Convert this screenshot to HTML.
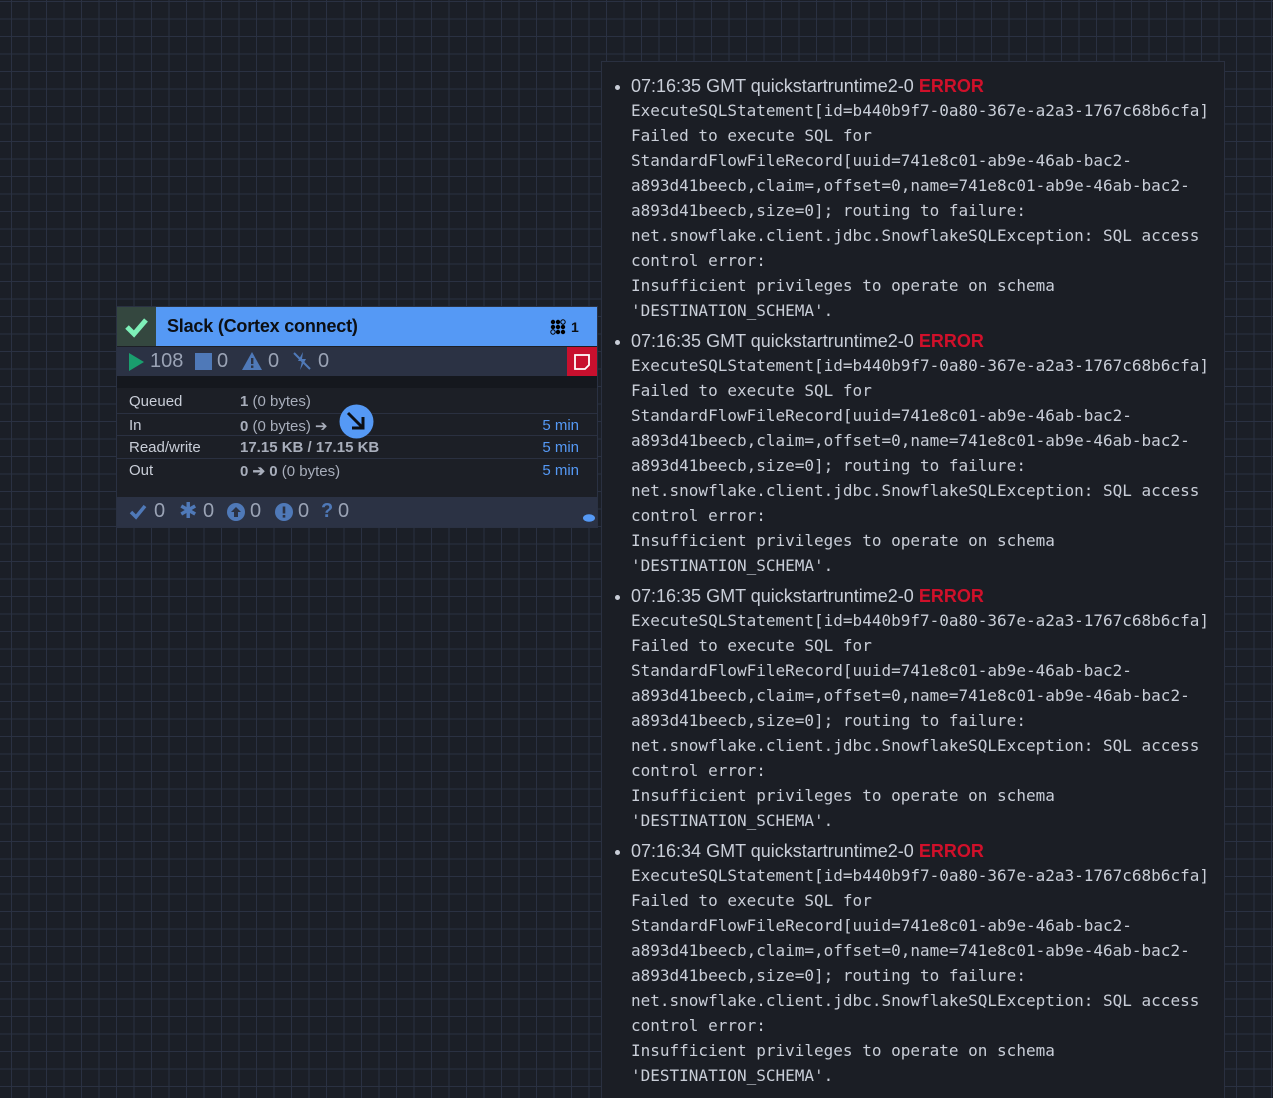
<!DOCTYPE html>
<html><head><meta charset="utf-8"><style>
html,body{margin:0;padding:0;overflow:hidden;width:1273px;height:1098px}
body{position:relative;background-color:#1b1f27;
background-image:linear-gradient(#2a3142 1px,transparent 1px),linear-gradient(90deg,#2a3142 1px,transparent 1px);
background-size:17.5px 17.5px;background-position:11px 1px;font-family:"Liberation Sans",sans-serif}
.node{position:absolute;left:117px;top:307px;width:480px;height:220px;background:#1c1f26;box-shadow:0 0 0 1px #2a3142}
.hdr{position:absolute;left:0;top:0;width:480px;height:39px;background:#5599f5}
.chk{position:absolute;left:0;top:0;width:39px;height:39px;background:#34473f}
.title{position:absolute;left:50px;top:9px;font-size:18px;color:#0c0f14;font-weight:bold;letter-spacing:-0.2px}
.stats{position:absolute;left:0;top:40px;width:480px;height:29px;background:#2b3244;color:#9aa3b5;font-size:20px}
.stats span{position:absolute;top:3px}
.red{position:absolute;right:0;top:0;width:30px;height:29px;background:#c8102e}
.tbl{position:absolute;left:0;top:83px;width:480px;font-size:15px;color:#c9ced8}
.row{position:absolute;left:0;width:480px;height:22px}
.row .l{position:absolute;left:12px;top:3px}
.row .v{position:absolute;left:123px;top:3px;color:#a8aebb}
.row .v b{color:#a8aebb}
.row .t{position:absolute;right:18px;top:3px;color:#5599f5}
.sep{border-top:1px solid #2a3040}
.bot{position:absolute;left:0;top:190px;width:480px;height:30px;background:#2b3244;color:#9aa3b5;font-size:20px}
.bot span{position:absolute;top:3px}
.ic{color:#4f79b8}
.panel{position:absolute;left:601px;top:61px;width:622px;height:1040px;background:#1b1e25;border:1px solid #2a3040}
.ent{position:absolute;left:29px;width:600px}
.h{font-size:18px;color:#c9ced8;height:25px;line-height:25px;position:relative}
.h:before{content:"";position:absolute;left:-16px;top:11px;width:5px;height:5px;border-radius:50%;background:#c9ced8}
.err{color:#d0102a;font-weight:bold}
.m{font-family:"DejaVu Sans Mono","Liberation Mono",monospace;font-size:16px;color:#c9ced8;line-height:25px;white-space:pre;margin-top:-1px}
</style></head><body>
<div class="node">
 <div class="hdr"><div class="chk"><svg width="39" height="39"><path d="M10 20 L17 27 L29 13" stroke="#7ef0b8" stroke-width="5" fill="none"/></svg></div>
 <div class="title">Slack (Cortex connect)</div>
 <svg style="position:absolute;left:433px;top:12px" width="16" height="16"><g fill="#000"><circle cx="3" cy="3" r="2.2"/><circle cx="8" cy="3" r="2.2"/><circle cx="13" cy="3" r="2.2" fill="none" stroke="#000"/><circle cx="3" cy="8" r="2.2"/><circle cx="8" cy="8" r="2.2"/><circle cx="13" cy="8" r="2.2"/><circle cx="3" cy="13" r="2.2" fill="none" stroke="#000"/><circle cx="8" cy="13" r="2.2"/><circle cx="13" cy="13" r="2.2"/></g></svg>
 <div style="position:absolute;left:454px;top:12px;font-size:14px;font-weight:bold;color:#0c0f14">1</div>
 </div>
 <div class="stats">
  <svg style="position:absolute;left:12px;top:6px" width="16" height="18"><path d="M0 0 L15 9 L0 18Z" fill="#1a9e6e"/></svg>
  <span style="left:33px">108</span>
  <svg style="position:absolute;left:78px;top:6px" width="17" height="17"><rect width="17" height="17" fill="#4f79b8"/></svg>
  <span style="left:100px">0</span>
  <svg style="position:absolute;left:125px;top:5px" width="20" height="18"><path d="M10 0 L20 18 L0 18Z" fill="#4f79b8"/><rect x="9" y="6" width="2.4" height="6" fill="#2b3244"/><rect x="9" y="13.5" width="2.4" height="2.4" fill="#2b3244"/></svg>
  <span style="left:151px">0</span>
  <svg style="position:absolute;left:175px;top:4px" width="20" height="20"><path d="M11 1 L6 10 L10 10 L8 19 L14 8 L10 8 Z" fill="#4f79b8"/><path d="M2 2 L18 18" stroke="#4f79b8" stroke-width="2"/></svg>
  <span style="left:201px">0</span>
  <div class="red"><svg width="30" height="29"><path d="M8 8 H22 V18 L18 22 H8Z" fill="none" stroke="#fff" stroke-width="1.8"/></svg></div>
 </div>
 <div style="position:absolute;left:0;top:69px;width:480px;height:12px;background:#15181e"></div>
 <div class="tbl">
  <div class="row" style="top:0"><span class="l">Queued</span><span class="v"><b>1</b> (0 bytes)</span></div>
  <div class="row sep" style="top:23px"><span class="l">In</span><span class="v"><b>0</b> (0 bytes) ➔</span><span class="t">5 min</span></div>
  <div class="row sep" style="top:45px"><span class="l">Read/write</span><span class="v"><b>17.15 KB / 17.15 KB</b></span><span class="t">5 min</span></div>
  <div class="row sep" style="top:68px"><span class="l">Out</span><span class="v"><b>0 ➔ 0</b> (0 bytes)</span><span class="t">5 min</span></div>
 </div>
 <svg style="position:absolute;left:222px;top:97px" width="35" height="35"><circle cx="17.5" cy="17.5" r="17" fill="#5599f5"/><path d="M9 9 L23 23 M24 13 L24 24 L13 24" stroke="#0c0f14" stroke-width="3" fill="none"/></svg>
 <div class="bot">
  <svg style="position:absolute;left:12px;top:7px" width="18" height="16"><path d="M2 8 L7 13 L16 2" stroke="#4f79b8" stroke-width="3.5" fill="none"/></svg>
  <span style="left:37px">0</span>
  <span class="ic" style="left:62px;font-size:22px;top:1px">✱</span>
  <span style="left:86px">0</span>
  <svg style="position:absolute;left:110px;top:6px" width="18" height="18"><circle cx="9" cy="9" r="9" fill="#4f79b8"/><path d="M9 4 L14 9 H11 V14 H7 V9 H4Z" fill="#2b3244"/></svg>
  <span style="left:133px">0</span>
  <svg style="position:absolute;left:158px;top:6px" width="18" height="18"><circle cx="9" cy="9" r="9" fill="#4f79b8"/><rect x="7.7" y="3.5" width="2.6" height="7" fill="#2b3244"/><rect x="7.7" y="12" width="2.6" height="2.6" fill="#2b3244"/></svg>
  <span style="left:181px">0</span>
  <span class="ic" style="left:204px;font-weight:bold">?</span>
  <span style="left:221px">0</span>
  <svg style="position:absolute;left:466px;top:17px" width="12" height="9"><ellipse cx="6" cy="4" rx="6" ry="3.8" fill="#5599f5"/></svg>
 </div>
</div>
<div class="panel">
<div class="ent" style="top:12px"><div class="h">07:16:35 GMT quickstartruntime2-0 <span class="err">ERROR</span></div><div class="m">ExecuteSQLStatement[id=b440b9f7-0a80-367e-a2a3-1767c68b6cfa]
Failed to execute SQL for
StandardFlowFileRecord[uuid=741e8c01-ab9e-46ab-bac2-
a893d41beecb,claim=,offset=0,name=741e8c01-ab9e-46ab-bac2-
a893d41beecb,size=0]; routing to failure:
net.snowflake.client.jdbc.SnowflakeSQLException: SQL access
control error:
Insufficient privileges to operate on schema
'DESTINATION_SCHEMA'.</div></div>
<div class="ent" style="top:267px"><div class="h">07:16:35 GMT quickstartruntime2-0 <span class="err">ERROR</span></div><div class="m">ExecuteSQLStatement[id=b440b9f7-0a80-367e-a2a3-1767c68b6cfa]
Failed to execute SQL for
StandardFlowFileRecord[uuid=741e8c01-ab9e-46ab-bac2-
a893d41beecb,claim=,offset=0,name=741e8c01-ab9e-46ab-bac2-
a893d41beecb,size=0]; routing to failure:
net.snowflake.client.jdbc.SnowflakeSQLException: SQL access
control error:
Insufficient privileges to operate on schema
'DESTINATION_SCHEMA'.</div></div>
<div class="ent" style="top:522px"><div class="h">07:16:35 GMT quickstartruntime2-0 <span class="err">ERROR</span></div><div class="m">ExecuteSQLStatement[id=b440b9f7-0a80-367e-a2a3-1767c68b6cfa]
Failed to execute SQL for
StandardFlowFileRecord[uuid=741e8c01-ab9e-46ab-bac2-
a893d41beecb,claim=,offset=0,name=741e8c01-ab9e-46ab-bac2-
a893d41beecb,size=0]; routing to failure:
net.snowflake.client.jdbc.SnowflakeSQLException: SQL access
control error:
Insufficient privileges to operate on schema
'DESTINATION_SCHEMA'.</div></div>
<div class="ent" style="top:777px"><div class="h">07:16:34 GMT quickstartruntime2-0 <span class="err">ERROR</span></div><div class="m">ExecuteSQLStatement[id=b440b9f7-0a80-367e-a2a3-1767c68b6cfa]
Failed to execute SQL for
StandardFlowFileRecord[uuid=741e8c01-ab9e-46ab-bac2-
a893d41beecb,claim=,offset=0,name=741e8c01-ab9e-46ab-bac2-
a893d41beecb,size=0]; routing to failure:
net.snowflake.client.jdbc.SnowflakeSQLException: SQL access
control error:
Insufficient privileges to operate on schema
'DESTINATION_SCHEMA'.</div></div>
</div>
</body></html>
